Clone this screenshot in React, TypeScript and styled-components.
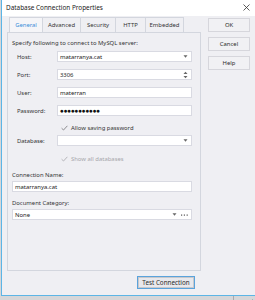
import React from "react";
import styled, { createGlobalStyle } from "styled-components";

const FS = 5.9;

const Global = createGlobalStyle`
  html, body { margin: 0; padding: 0; width: 255px; height: 300px; overflow: hidden; background: #d6d6d8; }
  body { font-family: "Noto Sans", "Liberation Sans", sans-serif; color: #333; }
  * { box-sizing: border-box; }
`;

const Screen = styled.div`
  width: 255px;
  height: 300px;
  display: flex;
  flex-direction: column;
  background: #d6d6d8;
`;

const Dialog = styled.div`
  position: relative;
  margin-left: 1px;
  width: 254px;
  height: 296px;
  border-left: 1px solid #5cb5e6;
  border-bottom: 1px solid #5cb5e6;
  background: #efeff3;
  display: flex;
  flex-direction: column;
`;

const TitleBar = styled.div`
  height: 16px;
  background: #ffffff;
  display: flex;
  align-items: center;
  justify-content: space-between;
  padding: 0 5px 1px 4px;
  font-size: 6.4px;
  color: #222;
`;

const Body = styled.div`
  flex: 1;
  display: flex;
  padding: 1px 0 0 5px;
  gap: 7px;
`;

const LeftCol = styled.div`
  width: 194px;
  display: flex;
  flex-direction: column;
`;

const Tabs = styled.div`
  height: 15px;
  display: flex;
  padding-left: 2px;
`;

const Tab = styled.div<{ $active?: boolean; $w: number }>`
  width: ${(p) => p.$w}px;
  height: 15px;
  display: flex;
  align-items: center;
  justify-content: center;
  margin-right: -1px;
  border: 1px solid #d3d6de;
  border-bottom: none;
  background: ${(p) => (p.$active ? "#f5f5f8" : "#efeff3")};
  color: ${(p) => (p.$active ? "#3b8fd9" : "#333")};
  font-size: ${FS}px;
`;

const Panel = styled.div`
  height: 239px;
  border: 1px solid #d3d6de;
  background: #efeff3;
  display: flex;
  flex-direction: column;
  padding: 0 8px 0 4px;
`;

const Desc = styled.div`
  height: 10px;
  line-height: 10px;
  margin-top: 5px;
  font-size: ${FS}px;
  white-space: nowrap;
`;

const Row = styled.div<{ $mt: number }>`
  display: grid;
  grid-template-columns: 45px 1fr;
  align-items: center;
  height: 11px;
  margin-top: ${(p) => p.$mt}px;
`;

const Label = styled.div<{ $indent?: number; $mt?: number }>`
  font-size: ${FS}px;
  padding-left: ${(p) => p.$indent ?? 5}px;
  margin-top: ${(p) => p.$mt ?? 0}px;
  white-space: nowrap;
  line-height: 10px;
`;

const Input = styled.div<{ $mt?: number }>`
  position: relative;
  grid-column: 2;
  height: 11px;
  margin-top: ${(p) => p.$mt ?? 0}px;
  background: #ffffff;
  border: 1px solid #d9dae2;
  display: flex;
  align-items: center;
  padding-left: 2px;
  font-size: ${FS}px;
  color: #222;
`;

const Dots = styled.span`
  font-size: 6.6px;
  letter-spacing: -0.35px;
  color: #111;
`;

const Arrows = styled.div`
  position: absolute;
  right: 3px;
  top: 0;
  bottom: 0;
  display: flex;
  align-items: center;
  gap: 4px;
`;

const Check = styled.div<{ $disabled?: boolean }>`
  grid-column: 2;
  display: flex;
  align-items: center;
  gap: 3px;
  padding-left: 4px;
  font-size: ${FS}px;
  color: ${(p) => (p.$disabled ? "#a6a6ab" : "#333")};
  white-space: nowrap;
`;

const Footer = styled.div`
  display: flex;
  justify-content: flex-end;
  padding: 5px 6px 0 0;
`;

const Button = styled.div<{ $w: number; $h: number; $default?: boolean }>`
  width: ${(p) => p.$w}px;
  height: ${(p) => p.$h}px;
  display: flex;
  align-items: center;
  justify-content: center;
  font-size: ${(p) => (p.$default ? 6.3 : FS)}px;
  color: #2b2b2b;
  background: ${(p) => (p.$default ? "#e8e8ec" : "#f1f1f4")};
  border: 1px solid ${(p) => (p.$default ? "#5aa3dc" : "#d6d6dc")};
  box-shadow: ${(p) => (p.$default ? "inset 0 0 0 1px #c8c8cc" : "none")};
`;

const RightCol = styled.div`
  display: flex;
  flex-direction: column;
  gap: 5px;
  padding-top: 1px;
`;

const Grip = styled.div`
  position: absolute;
  right: 1px;
  bottom: 1px;
  width: 6px;
  height: 6px;
`;

const BottomStrip = styled.div`
  flex: 1;
  display: flex;
  justify-content: flex-end;
  padding-right: 21px;
`;

const StripLine = styled.div`
  width: 1px;
  background: #a9a9ad;
`;

const Caret = () => (
  <svg width="5" height="3" viewBox="0 0 5 3">
    <path d="M0.5 0.3 L4.5 0.3 L2.5 2.7 Z" fill="#666" />
  </svg>
);

const Spin = () => (
  <svg width="5" height="8" viewBox="0 0 5 8">
    <path d="M0.5 3 L4.5 3 L2.5 0.8 Z" fill="#666" />
    <path d="M0.5 5 L4.5 5 L2.5 7.2 Z" fill="#666" />
  </svg>
);

const Ellipsis = () => (
  <svg width="7" height="2" viewBox="0 0 7 2">
    <rect x="0" y="0.5" width="1.2" height="1.2" fill="#555" />
    <rect x="2.8" y="0.5" width="1.2" height="1.2" fill="#555" />
    <rect x="5.6" y="0.5" width="1.2" height="1.2" fill="#555" />
  </svg>
);

const Tick = ({ color }: { color: string }) => (
  <svg width="7" height="6" viewBox="0 0 7 6">
    <path d="M0.6 3.2 L2.5 5 L6.4 0.8" stroke={color} strokeWidth="1" fill="none" />
  </svg>
);

export default function App() {
  return (
    <Screen>
      <Global />
      <Dialog>
        <TitleBar>
          <span>Database Connection Properties</span>
          <svg width="7" height="7" viewBox="0 0 7 7">
            <path d="M0.5 0.5 L6.5 6.5 M6.5 0.5 L0.5 6.5" stroke="#333" strokeWidth="0.8" />
          </svg>
        </TitleBar>
        <Body>
          <LeftCol>
            <Tabs>
              <Tab $active $w={34}>General</Tab>
              <Tab $w={39}>Advanced</Tab>
              <Tab $w={36}>Security</Tab>
              <Tab $w={31}>HTTP</Tab>
              <Tab $w={39}>Embedded</Tab>
            </Tabs>
            <Panel>
              <Desc>Specify following to connect to MySQL server:</Desc>
              <Row $mt={3}>
                <Label>Host:</Label>
                <Input>
                  matarranya.cat
                  <Arrows><Caret /></Arrows>
                </Input>
              </Row>
              <Row $mt={7}>
                <Label>Port:</Label>
                <Input>
                  3306
                  <Arrows><Spin /></Arrows>
                </Input>
              </Row>
              <Row $mt={7}>
                <Label>User:</Label>
                <Input>materran</Input>
              </Row>
              <Row $mt={7}>
                <Label>Password:</Label>
                <Input><Dots>●●●●●●●●●●●</Dots></Input>
              </Row>
              <Row $mt={6}>
                <Check>
                  <Tick color="#8c8c90" />
                  Allow saving password
                </Check>
              </Row>
              <Row $mt={2}>
                <Label>Database:</Label>
                <Input>
                  <Arrows><Caret /></Arrows>
                </Input>
              </Row>
              <Row $mt={7}>
                <Check $disabled>
                  <Tick color="#b5b5ba" />
                  Show all databases
                </Check>
              </Row>
              <Label $indent={0} $mt={6}>Connection Name:</Label>
              <Input $mt={1}>matarranya.cat</Input>
              <Label $indent={0} $mt={6}>Document Category:</Label>
              <Input $mt={1}>
                None
                <Arrows><Caret /><Ellipsis /></Arrows>
              </Input>
            </Panel>
            <Footer>
              <Button $w={58} $h={13} $default>Test Connection</Button>
            </Footer>
          </LeftCol>
          <RightCol>
            <Button $w={42} $h={14}>OK</Button>
            <Button $w={42} $h={14}>Cancel</Button>
            <Button $w={42} $h={14}>Help</Button>
          </RightCol>
        </Body>
        <Grip>
          <svg width="6" height="6" viewBox="0 0 6 6">
            <rect x="4" y="0" width="1" height="1" fill="#b0b0b4" />
            <rect x="2" y="2" width="1" height="1" fill="#b0b0b4" />
            <rect x="4" y="2" width="1" height="1" fill="#b0b0b4" />
            <rect x="0" y="4" width="1" height="1" fill="#b0b0b4" />
            <rect x="2" y="4" width="1" height="1" fill="#b0b0b4" />
            <rect x="4" y="4" width="1" height="1" fill="#b0b0b4" />
          </svg>
        </Grip>
      </Dialog>
      <BottomStrip>
        <StripLine />
      </BottomStrip>
    </Screen>
  );
}
